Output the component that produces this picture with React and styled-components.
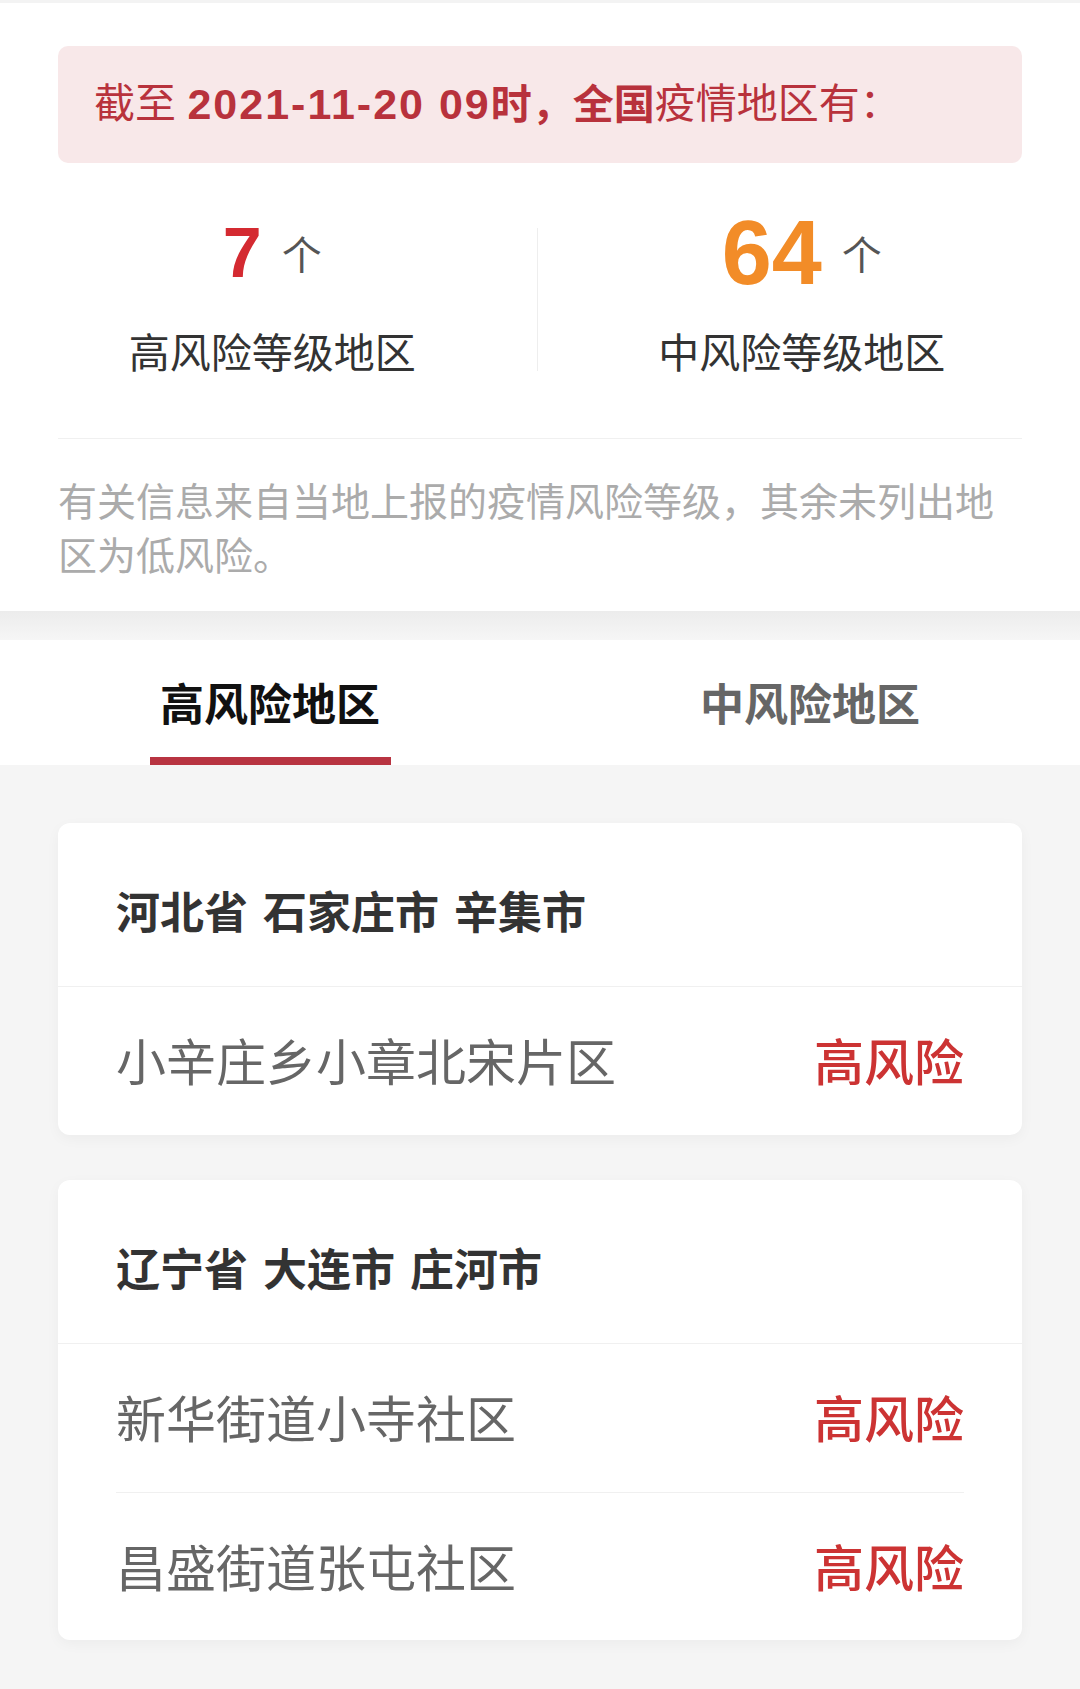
import React from "react"
import styled, { createGlobalStyle } from "styled-components"

const GlobalStyle = createGlobalStyle`
  html, body {
    margin: 0;
    padding: 0;
    background: #f5f5f5;
  }
  body {
    font-family: "Noto Sans CJK SC", "Liberation Sans", sans-serif;
  }
`

const Page = styled.div`
  width: 1080px;
  min-height: 1689px;
  background: #f5f5f5;
`

const Summary = styled.section`
  background: #ffffff;
  border-top: 3px solid #f3f3f3;
  padding: 43px 0 31px;
`

const Banner = styled.div`
  margin: 0 58px;
  height: 117px;
  display: flex;
  align-items: center;
  padding-left: 36px;
  background: #f8e8e9;
  border-radius: 10px;
  color: #b8323c;
  font-size: 41px;
  line-height: 1;
  font-family: "Liberation Sans", "Noto Sans CJK SC", sans-serif;
  white-space: pre;
`

const Strong = styled.span`
  font-weight: 700;
`

const DateText = styled.span`
  font-size: 43px;
  letter-spacing: 2px;
`

const Stats = styled.div`
  display: flex;
  margin-top: 50px;
  padding: 0 14px 0 8px;
`

const StatCol = styled.div`
  flex: 1;
  display: flex;
  flex-direction: column;
  align-items: center;
`

const NumberRow = styled.div`
  height: 80px;
  display: flex;
  align-items: center;
  justify-content: center;
  gap: 20px;
`

const Count = styled.span`
  font-family: "Liberation Sans", sans-serif;
  font-weight: 700;
  font-size: ${p => p.$size}px;
  line-height: 1;
  color: ${p => p.$color};
`

const Unit = styled.span`
  font-size: 40px;
  line-height: 1;
  color: #555555;
`

const StatLabel = styled.div`
  margin-top: 37px;
  font-size: 41px;
  line-height: 41px;
  color: #333333;
`

const VLine = styled.div`
  width: 1px;
  height: 143px;
  align-self: flex-end;
  background: #eeeeee;
`

const HLine = styled.div`
  margin: 67px 58px 0;
  height: 1px;
  background: #f0f0f0;
`

const Note = styled.p`
  margin: 33px 58px 0;
  font-size: 39px;
  line-height: 54px;
  color: #ababab;
`

const Band = styled.div`
  height: 29px;
  background: linear-gradient(#ececec, #f6f6f6);
`

const Tabs = styled.nav`
  display: flex;
  height: 125px;
  background: #ffffff;
`

const Tab = styled.div`
  flex: 1;
  display: flex;
  flex-direction: column;
  align-items: center;
  padding-top: 40px;
`

const TabLabel = styled.span`
  font-size: 44px;
  line-height: 44px;
  font-weight: 700;
  color: ${p => (p.$active ? "#111111" : "#666666")};
`

const Underline = styled.div`
  margin-top: 33px;
  width: 241px;
  height: 8px;
  background: #b83441;
`

const List = styled.div`
  display: flex;
  flex-direction: column;
  gap: 45px;
  padding: 58px 58px 49px;
`

const Card = styled.div`
  background: #ffffff;
  border-radius: 12px;
  box-shadow: 0 4px 14px rgba(0, 0, 0, 0.04);
  overflow: hidden;
`

const CardHead = styled.div`
  height: 153px;
  padding: 10px 58px 0;
  display: flex;
  align-items: center;
  border-bottom: 1px solid #f0f0f0;
  font-size: 44px;
  font-weight: 700;
  color: #333333;
  word-spacing: 5px;
`

const Row = styled.div`
  height: 148px;
  margin: 0 58px;
  display: flex;
  align-items: center;
  justify-content: space-between;
  font-size: 50px;
  line-height: 1;
  padding-bottom: 4px;
  box-sizing: border-box;
  & + & {
    border-top: 1px solid #f0f0f0;
  }
`

const Place = styled.span`
  color: #666666;
`

const Risk = styled.span`
  color: #cc3333;
  font-weight: 500;
`

const regions = [
  {
    title: "河北省 石家庄市 辛集市",
    places: ["小辛庄乡小章北宋片区"],
  },
  {
    title: "辽宁省 大连市 庄河市",
    places: ["新华街道小寺社区", "昌盛街道张屯社区"],
  },
]

export default function App() {
  return (
    <Page>
      <GlobalStyle />
      <Summary>
        <Banner>
          {"截至 "}
          <Strong>
            <DateText>2021-11-20 09</DateText>时，全国
          </Strong>
          疫情地区有：
        </Banner>
        <Stats>
          <StatCol>
            <NumberRow>
              <Count $size={70} $color="#d42a31">7</Count>
              <Unit>个</Unit>
            </NumberRow>
            <StatLabel>高风险等级地区</StatLabel>
          </StatCol>
          <VLine />
          <StatCol>
            <NumberRow>
              <Count $size={90} $color="#f28c28">64</Count>
              <Unit>个</Unit>
            </NumberRow>
            <StatLabel>中风险等级地区</StatLabel>
          </StatCol>
        </Stats>
        <HLine />
        <Note>有关信息来自当地上报的疫情风险等级，其余未列出地区为低风险。</Note>
      </Summary>
      <Band />
      <Tabs>
        <Tab>
          <TabLabel $active>高风险地区</TabLabel>
          <Underline />
        </Tab>
        <Tab>
          <TabLabel>中风险地区</TabLabel>
        </Tab>
      </Tabs>
      <List>
        {regions.map(region => (
          <Card key={region.title}>
            <CardHead>{region.title}</CardHead>
            {region.places.map(place => (
              <Row key={place}>
                <Place>{place}</Place>
                <Risk>高风险</Risk>
              </Row>
            ))}
          </Card>
        ))}
      </List>
    </Page>
  )
}
